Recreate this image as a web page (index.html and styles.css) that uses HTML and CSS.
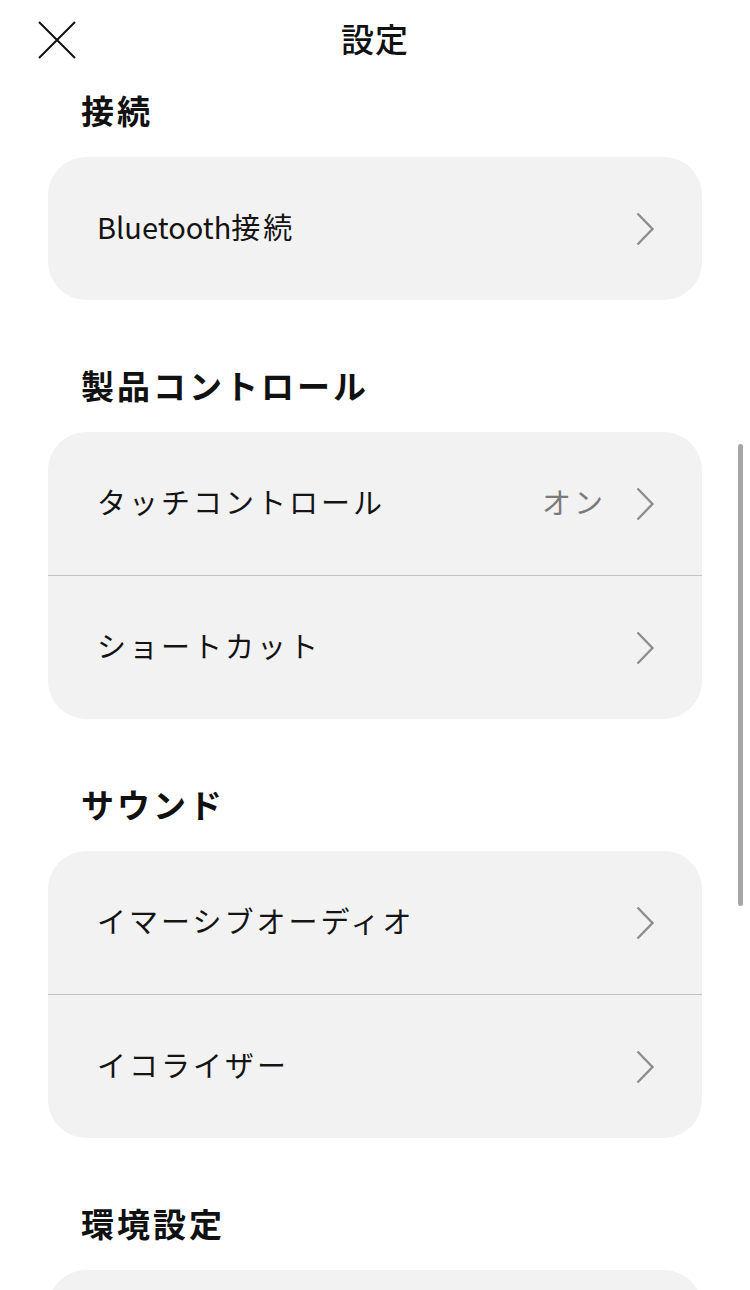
FILE: index.html
```html
<!DOCTYPE html>
<html lang="ja">
<head>
<meta charset="utf-8">
<title>設定</title>
<link rel="stylesheet" href="styles.css">
</head>
<body>
<div class="page">
  <header class="header">
    <button class="close" aria-label="閉じる">
      <svg width="40" height="38" viewBox="0 0 40 38"><path d="M2 1 L38 37 M38 1 L2 37" stroke="#111" stroke-width="2" fill="none"/></svg>
    </button>
    <h1 class="title">設定</h1>
  </header>

  <section class="section first">
    <h2 class="section-title">接続</h2>
    <div class="card">
      <div class="row"><span class="label"><span class="latin">Bluetooth</span>接続</span><span class="chev"><svg width="20" height="34" viewBox="0 0 20 34"><path d="M2.5 1.5 L17.5 17 L2.5 32.5" stroke="#8e8e8e" stroke-width="2.4" fill="none"/></svg></span></div>
    </div>
  </section>

  <section class="section">
    <h2 class="section-title">製品コントロール</h2>
    <div class="card">
      <div class="row"><span class="label">タッチコントロール</span><span class="value">オン</span><span class="chev"><svg width="20" height="34" viewBox="0 0 20 34"><path d="M2.5 1.5 L17.5 17 L2.5 32.5" stroke="#8e8e8e" stroke-width="2.4" fill="none"/></svg></span></div>
      <div class="divider"></div>
      <div class="row"><span class="label">ショートカット</span><span class="chev"><svg width="20" height="34" viewBox="0 0 20 34"><path d="M2.5 1.5 L17.5 17 L2.5 32.5" stroke="#8e8e8e" stroke-width="2.4" fill="none"/></svg></span></div>
    </div>
  </section>

  <section class="section">
    <h2 class="section-title">サウンド</h2>
    <div class="card">
      <div class="row"><span class="label">イマーシブオーディオ</span><span class="chev"><svg width="20" height="34" viewBox="0 0 20 34"><path d="M2.5 1.5 L17.5 17 L2.5 32.5" stroke="#8e8e8e" stroke-width="2.4" fill="none"/></svg></span></div>
      <div class="divider"></div>
      <div class="row"><span class="label">イコライザー</span><span class="chev"><svg width="20" height="34" viewBox="0 0 20 34"><path d="M2.5 1.5 L17.5 17 L2.5 32.5" stroke="#8e8e8e" stroke-width="2.4" fill="none"/></svg></span></div>
    </div>
  </section>

  <section class="section">
    <h2 class="section-title">環境設定</h2>
    <div class="card">
      <div class="row"></div>
    </div>
  </section>

  <div class="scrollbar"></div>
</div>
</body>
</html>
```

FILE: styles.css
```css
html, body {
  margin: 0;
  padding: 0;
  background: #ffffff;
}
body {
  font-family: "Noto Sans CJK JP", "Noto Sans", sans-serif;
  color: #111;
  overflow: hidden;
}
.page {
  position: relative;
  width: 750px;
  height: 1290px;
  overflow: hidden;
}
.header {
  position: relative;
  height: 76px;
  display: flex;
  align-items: center;
  justify-content: center;
}
.close {
  position: absolute;
  left: 37px;
  top: 21px;
  padding: 0;
  border: 0;
  background: none;
  line-height: 0;
}
.title {
  margin: 0;
  font-size: 33px;
  font-weight: 500;
  letter-spacing: 1px;
  line-height: 76px;
}
.section {
  margin-top: 61px;
}
.section.first {
  margin-top: 10px;
}
.section-title {
  margin: 0 0 23px 81px;
  font-size: 33px;
  font-weight: 700;
  letter-spacing: 3px;
  line-height: 48px;
}
.card {
  margin: 0 48px;
  background: #f2f2f2;
  border-radius: 38px;
  overflow: hidden;
}
.row {
  height: 143px;
  box-sizing: border-box;
  display: flex;
  align-items: center;
  padding: 0 47px 6px 49px;
}
.label {
  flex: 1;
  font-size: 29px;
  letter-spacing: 3px;
  color: #141414;
}
.latin {
  letter-spacing: 0;
}
.value {
  font-size: 29px;
  letter-spacing: 3px;
  color: #7a7a7a;
  margin-right: 29px;
}
.chev {
  width: 20px;
  height: 34px;
  line-height: 0;
  margin-top: 6px;
}
.divider {
  height: 1px;
  background: #c2c2c2;
}
.scrollbar {
  position: absolute;
  right: 7px;
  top: 444px;
  width: 5px;
  height: 462px;
  border-radius: 3px;
  background: #a6a6a6;
}
```
